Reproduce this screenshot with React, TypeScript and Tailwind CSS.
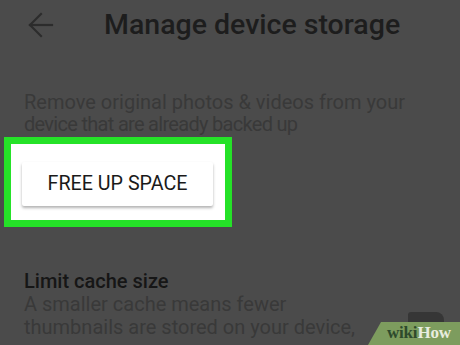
import React from "react";

export default function App() {
  return (
    <div
      className="relative w-[460px] h-[345px] overflow-hidden bg-[#4b4b4b]"
      style={{ fontFamily: "Roboto, 'Liberation Sans', sans-serif" }}
    >
      {/* header */}
      <div className="flex items-center h-[32px] mt-[9px]">
        <svg
          width="26"
          height="26"
          viewBox="0 0 26 26"
          className="ml-[28px]"
          fill="none"
          stroke="#2c2c2c"
          strokeWidth="2.2"
          strokeLinecap="square"
        >
          <path d="M2 13H24" />
          <path d="M13 2L2 13L13 24" />
        </svg>
        <div className="ml-[50px] text-[28.5px] leading-[32px] font-medium text-[#1d1d1d]">
          Manage device storage
        </div>
      </div>

      {/* description */}
      <div className="mt-[50px] pl-[24px] text-[20px] leading-[22px] text-[#393939]">
        <div>Remove original photos &amp; videos from your</div>
        <div className="tracking-[-0.7px]">device that are already backed up</div>
      </div>

      {/* highlighted button */}
      <div className="mt-[2px] ml-[4px] w-[228px] h-[90px] border-[7px] border-[#25e228] bg-white pl-[11px] pt-[18px]">
        <div className="w-[191px] h-[44px] bg-white rounded-[2px] shadow-[0_2px_3px_rgba(0,0,0,0.3)] flex items-center justify-center text-[19.7px] text-[#1a1a1a]">
          FREE UP SPACE
        </div>
      </div>

      {/* cache section */}
      <div className="mt-[42px] pl-[24px]">
        <div className="text-[20px] leading-[24px] font-medium text-[#161616]">
          Limit cache size
        </div>
        <div className="text-[20px] leading-[23px] text-[#393939]">
          <div>A smaller cache means fewer</div>
          <div>thumbnails are stored on your device,</div>
        </div>
      </div>

      {/* partially hidden switch */}
      <div className="absolute left-[408px] top-[312px] w-[36px] h-[20px] rounded-tr-[8px] rounded-tl-[3px] bg-[#363636]" />

      {/* wikiHow watermark */}
      <div className="absolute right-0 bottom-0 w-[92px] h-[23px]">
        <svg width="92" height="23" viewBox="0 0 92 23" className="absolute inset-0">
          <polygon points="13,0 92,0 92,23 0,23" fill="#7d9c5e" />
        </svg>
        <div
          className="absolute left-[19px] top-[1px] text-[17px] leading-[20px] font-bold tracking-[-0.2px]"
          style={{ fontFamily: "'Liberation Serif', 'DejaVu Serif', serif" }}
        >
          <span className="text-[#2e4a2c]">wiki</span>
          <span className="text-[#e8ecdf]">How</span>
        </div>
      </div>
    </div>
  );
}
